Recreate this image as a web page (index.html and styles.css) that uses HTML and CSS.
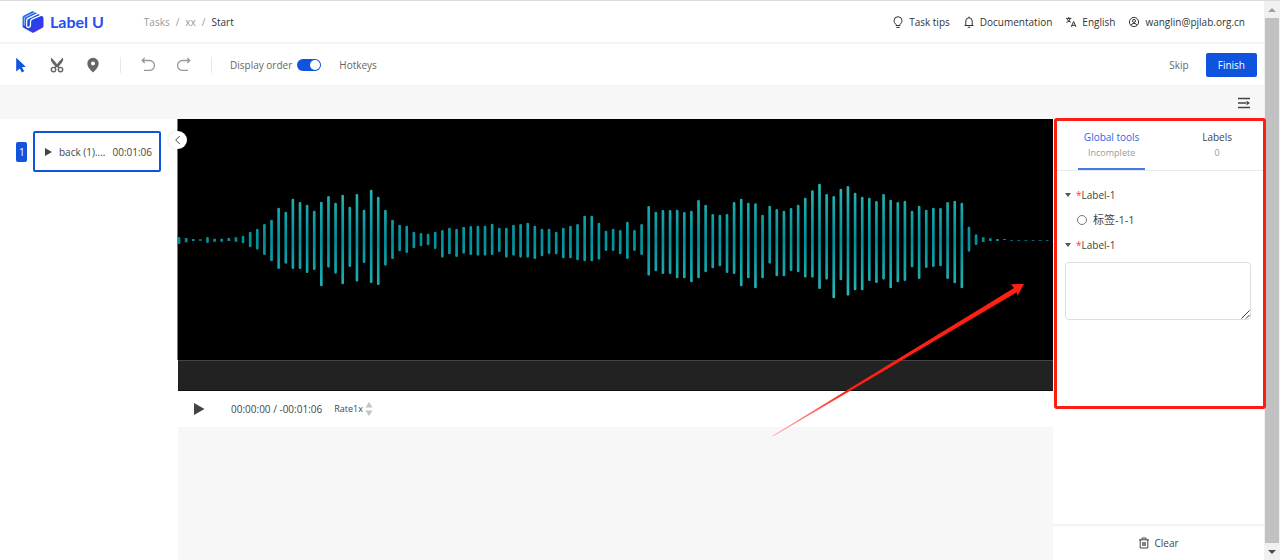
FILE: index.html
```html
<!DOCTYPE html>
<html lang="en">
<head>
<meta charset="utf-8">
<title>Label U</title>
<link rel="stylesheet" href="styles.css">
</head>
<body>
<div class="app">
  <header class="header">
    <a class="logo" href="#">
      <svg class="logo-mark" viewBox="0 0 22 22" aria-hidden="true">
        <defs><linearGradient id="brand" x1="0" y1="0" x2="1" y2="1"><stop offset="0" stop-color="#2f8dff"/><stop offset=".45" stop-color="#1747e6"/><stop offset="1" stop-color="#5a2cf0"/></linearGradient></defs>
        <path d="M11 .3L20.3 5.2Q21.5 5.9 21.5 7V15.2Q21.5 16.2 20.5 16.8L11.9 21.5Q11 22 10.1 21.5L1.5 16.8Q.5 16.2.5 15.2V6.2Q.5 5.2 1.5 4.7L9.7.4Q10.4 0 11 .3Z" fill="url(#brand)"/>
        <path d="M2.3 14.5V8.2Q2.3 6.6 3.7 5.9L13 1.2" fill="none" stroke="#fff" stroke-width=".6"/>
        <path d="M4.6 13.5V9.9Q4.6 8.2 6.1 7.4L16.8 2.2M4.6 13.5Q4.3 16.5 6.2 16.5 8.5 16.3 8.5 13.8V10.8Q8.5 8.9 10.1 8.1L20 3.8" fill="none" stroke="#fff" stroke-width="1.3"/>
      </svg>
      <span>Label U</span>
    </a>
    <nav class="crumbs" aria-label="Breadcrumb"><a href="#">Tasks</a><span>/</span><a href="#">xx</a><span>/</span><b>Start</b></nav>
    <nav class="links">
      <a href="#"><svg viewBox="0 0 12 12"><path d="M4 8.3Q2 7 2 4.7A4 4 0 0 1 10 4.7Q10 7 8 8.3V9.5H4ZM4.3 11.4H7.7"/></svg>Task tips</a>
      <a href="#"><svg viewBox="0 0 12 12"><path d="M1.5 9.5H10.5M2.8 9.5V5A3.2 3.2 0 0 1 9.2 5V9.5M6 1.8V.6M4.8 11.3H7.2"/></svg>Documentation</a>
      <a href="#"><svg viewBox="0 0 12 12"><path d="M1 2.4H6.4M3.7 1.2V2.4M1.4 6.5Q4.8 5.3 5.2 2.6M2.2 3.2Q3.2 5.5 5.8 6.2M6.2 10.9L8.6 5.5 11 10.9M7 9.3H10.2"/></svg>English</a>
      <a href="#"><svg viewBox="0 0 12 12"><circle cx="6" cy="6" r="4.6"/><circle cx="6" cy="4.9" r="1.5"/><path d="M3.2 9.3Q3.7 7.3 6 7.3T8.8 9.3"/></svg>wanglin@pjlab.org.cn</a>
    </nav>
  </header>

  <div class="toolbar">
    <div class="tools">
      <button aria-label="Select" class="blue"><svg viewBox="0 0 16 16"><path fill="currentColor" d="M3.2.8L12.8 9.8 9 10.2 11.2 14.3 8.8 15.4 6.9 11.4 3.2 14.6Z"/></svg></button>
      <button aria-label="Cut"><svg viewBox="0 0 16 16"><path fill="currentColor" d="M2 .8Q4 2 8 7.3 12 2 14 .8 15.2 4.1 10.5 8.5L9 10.2H7L5.5 8.5Q.8 4.1 2 .8Z"/><g fill="none" stroke="currentColor" stroke-width="1.4"><circle cx="4.5" cy="12.6" r="2.2"/><circle cx="11.5" cy="12.6" r="2.2"/><path d="M5.8 10.8L8 8.4 10.2 10.8"/></g></svg></button>
      <button aria-label="Point"><svg viewBox="0 0 16 16"><path fill="currentColor" fill-rule="evenodd" d="M8 .8A5.7 5.7 0 0 1 13.7 6.5Q13.7 10.4 8 15.5 2.3 10.4 2.3 6.5A5.7 5.7 0 0 1 8 .8ZM8 4.4A2 2 0 1 0 8 8.4 2 2 0 0 0 8 4.4Z"/></svg></button>
    </div>
    <div class="history">
      <button aria-label="Undo"><svg viewBox="0 0 16 16"><path d="M2.5 3.5H9.5A4.9 4.9 0 0 1 9.5 13.4H4M4.7 1L2.2 3.5 4.7 6"/></svg></button>
      <button aria-label="Redo"><svg viewBox="0 0 16 16"><path d="M13.5 3.5H6.5A4.9 4.9 0 0 0 6.5 13.4H12M11.3 1L13.8 3.5 11.3 6"/></svg></button>
    </div>
    <label class="order">Display order<input type="checkbox" role="switch" checked></label>
    <button class="hotkeys">Hotkeys</button>
    <div class="actions"><button>Skip</button><button class="primary">Finish</button></div>
  </div>

  <div class="strip"><button aria-label="Collapse panel"><svg viewBox="0 0 12 12"><path d="M0 1.5H12M0 6H8M0 10.5H12" stroke="currentColor" stroke-width="1.3"/><path d="M8.5 3.8L12 6 8.5 8.2Z" fill="currentColor"/></svg></button></div>

  <div class="main">
    <aside class="files">
      <span class="index">1</span>
      <button class="file"><svg viewBox="0 0 8 8"><path d="M1 0L8 4 1 8Z" fill="currentColor"/></svg><span>back (1)....</span><time>00:01:06</time></button>
      <button class="fold" aria-label="Collapse list"><svg viewBox="0 0 10 10"><path d="M6.7 1L2.7 5 6.7 9" fill="none" stroke="currentColor"/></svg></button>
    </aside>

    <main class="stage">
      <svg class="wave" viewBox="0 0 2625 723" preserveAspectRatio="none" role="img" aria-label="Waveform">
        <defs><linearGradient id="tone" gradientUnits="userSpaceOnUse" x1="0" y1="190" x2="0" y2="540"><stop offset="0" stop-color="#2bbab5"/><stop offset=".5" stop-color="#00909c"/><stop offset="1" stop-color="#2bbab5"/></linearGradient></defs>
        <path id="loud" fill="none" stroke="url(#tone)" stroke-width="8" stroke-linecap="round"/>
        <path id="quiet" fill="none" stroke="#00909c" stroke-width="8"/>
      </svg>
      <div class="track"></div>
      <div class="player">
        <button class="play" aria-label="Play"><svg viewBox="0 0 12 14"><path d="M1 1L11.5 7 1 13Z" fill="currentColor"/></svg></button>
        <span class="time">00:00:00 / -00:01:06</span>
        <button class="rate">Rate1x<svg viewBox="0 0 8 16"><path d="M4 1L7.5 6.5H.5ZM4 15L7.5 9.5H.5Z" fill="#c4c4c4"/></svg></button>
      </div>
    </main>

    <aside class="panel">
      <div class="tabs" role="tablist">
        <button role="tab" aria-selected="true" class="tab active">Global tools<small>Incomplete</small></button>
        <button role="tab" aria-selected="false" class="tab">Labels<small>0</small></button>
      </div>
      <div class="form">
        <button class="group"><i></i><em>*</em>Label-1</button>
        <label class="option"><input type="radio" name="tag">标签-1-1</label>
        <button class="group"><i></i><em>*</em>Label-1</button>
        <div class="field"><textarea aria-label="Label-1"></textarea><svg viewBox="0 0 9 9" aria-hidden="true"><path d="M.5 8.5L8.5.5M5 8.5L8.5 5" stroke="#333"/></svg></div>
      </div>
      <button class="clear"><svg viewBox="0 0 12 12"><path d="M1 2.8H11M4 2.8V1H8V2.8M2.2 2.8V11H9.8V2.8M4.8 5V9M7.2 5V9M6 5V9"/></svg>Clear</button>
      <div class="highlight"></div>
      <svg class="arrow" viewBox="0 0 252 152" aria-hidden="true">
        <defs><linearGradient id="fade" gradientUnits="userSpaceOnUse" x1="0" y1="152" x2="75" y2="107"><stop offset="0" stop-color="#fe2012" stop-opacity=".3"/><stop offset="1" stop-color="#fe2012"/></linearGradient></defs>
        <path d="M0 152L242 4 239 .2 252 0 245.5 11.7 244.8 8.2 1 152.5Z" fill="url(#fade)"/>
      </svg>
    </aside>
  </div>
</div>
<div class="scroll" aria-hidden="true"><i class="up"></i><div class="thumb"></div><i class="down"></i></div>
<script src="wave.js"></script>
</body>
</html>
```
FILE: styles.css
```css
* { box-sizing: border-box; }
body { margin: 0; display: flex; min-height: 100vh; background: #fff; color: #444; font: 10px/16px "Open Sans", "Noto Sans CJK SC", sans-serif; }
button { padding: 0; border: 0; background: none; color: inherit; font: inherit; cursor: pointer; }
a { color: inherit; text-decoration: none; }
svg { display: block; flex: none; }
.app { flex: 1; min-width: 0; display: flex; flex-direction: column; border-top: 1px solid #dcdcdc; }

.header { display: flex; align-items: center; height: 43px; padding: 0 19px 0 22px; border-bottom: 2px solid #f4f4f4; }
.logo { display: flex; align-items: center; gap: 6px; color: #2450ee; font: 700 16px/22px Lato, sans-serif; }
.logo-mark { width: 22px; height: 22px; }
.crumbs { display: flex; gap: 6px; margin-left: 40px; color: #999; }
.crumbs b { font-weight: 400; color: #333; }
.links { display: flex; gap: 13px; margin-left: auto; color: #333; }
.links a { display: flex; align-items: center; gap: 5px; }
.links svg, .clear svg { width: 12px; height: 12px; fill: none; stroke: currentColor; }

.toolbar { display: flex; align-items: center; height: 42px; padding: 0 7px 0 13px; border-bottom: 1px solid #f2f2f2; color: #666; }
.tools, .history { display: flex; gap: 20px; padding-right: 19px; border-right: 1px solid #e8e8e8; }
.tools svg, .history svg { width: 16px; height: 16px; }
.history { padding: 0 19px; color: #999; }
.history svg { fill: none; stroke: currentColor; stroke-width: 1.3; }
.blue { color: #1053dd; }
.order { display: flex; align-items: center; gap: 5px; margin-left: 18px; }
.order input { appearance: none; width: 24px; height: 12px; margin: 0; padding: 1px; border-radius: 6px; background: #1053dd; }
.order input::before { content: ""; display: block; width: 10px; height: 10px; margin-left: auto; border-radius: 50%; background: #fff; }
.hotkeys { margin-left: 18px; }
.actions { display: flex; align-items: center; gap: 17px; margin-left: auto; }
.primary { padding: 4px 12px; border-radius: 2px; background: #1053dd; color: #fff; }

.strip { display: flex; align-items: center; justify-content: flex-end; height: 33px; padding-right: 14px; background: #f7f7f7; color: #444; }
.strip svg { width: 12px; height: 12px; }

.main { flex: 1; display: grid; grid-template-columns: 178px 1fr 211px; }
.files { position: relative; display: flex; align-items: center; gap: 6px; align-self: start; padding: 12px 17px 12px 16px; }
.index { padding: 2px 3px; width: 11px; border-radius: 2px; background: #1053dd; color: #fff; text-align: center; }
.file { flex: 1; display: flex; align-items: center; gap: 7px; height: 41px; padding: 0 7px 0 9px; border: 2px solid #1053dd; border-radius: 2px; white-space: nowrap; }
.file svg { width: 8px; height: 8px; }
.file time { margin-left: auto; }
.fold { position: absolute; top: 12px; right: -9px; z-index: 2; display: grid; place-items: center; width: 18px; height: 18px; border-radius: 50%; background: #fff; box-shadow: 0 0 4px #0002; }
.fold svg { width: 10px; height: 10px; }

.stage { background: #f7f7f7; }
.wave { width: 100%; height: 241px; background: #000; box-shadow: -1px 0 #4a7bdc; }
.track { height: 31px; border-top: 1px solid #444; border-bottom: 1px solid #111; background: #222; }
.player { display: flex; align-items: center; height: 36px; padding-left: 15px; background: #fff; }
.play svg { width: 12px; height: 14px; }
.time { margin-left: 26px; }
.rate { display: flex; align-items: center; gap: 2px; margin-left: 12px; font-size: 9px; }
.rate svg { width: 8px; height: 16px; }

.panel { position: relative; display: flex; flex-direction: column; }
.tabs { display: grid; grid-template-columns: 5fr 4fr; height: 52px; border-bottom: 1px solid #e9e9e9; }
.tab { justify-self: center; align-self: end; height: 42px; padding: 0 6px 9px; }
.tab.active { color: #2b67e3; border-bottom: 2px solid #427be6; padding-bottom: 7px; }
.tab small { display: block; font-size: 9px; color: #999; }
.form { display: grid; align-content: start; justify-items: start; gap: 9px; padding: 16px 13px 0 12px; }
.group { display: flex; align-items: center; }
.group i { margin-right: 5px; border: 3px solid transparent; border-top: 4px solid #555; border-bottom: 0; }
.group em { color: #f33; font-style: normal; }
.option { display: flex; align-items: center; gap: 6px; padding-left: 12px; font-size: 11px; }
.option input { appearance: none; width: 10px; height: 10px; margin: 0; border: 1px solid #777; border-radius: 50%; }
.field { position: relative; justify-self: stretch; }
.field textarea { display: block; width: 100%; height: 58px; border: 1px solid #ddd; border-radius: 4px; resize: none; font: inherit; }
.field svg { position: absolute; right: 1px; bottom: 1px; width: 9px; height: 9px; }
.clear { display: flex; align-items: center; justify-content: center; gap: 4px; height: 36px; margin-top: auto; border-top: 2px solid #f3f3f3; }
.highlight { position: absolute; top: -1px; left: 1px; right: -2px; height: 291px; border: 3px solid #fe1d12; border-radius: 3px; pointer-events: none; }
.arrow { position: absolute; top: 165px; right: 240px; width: 252px; height: 152px; pointer-events: none; }

.scroll { display: flex; flex-direction: column; align-items: center; width: 16px; border-top: 1px solid #dcdcdc; background: #f1f1f1; }
.scroll .thumb { flex: 1; width: 14px; background: #c1c1c1; }
.scroll i { border: 4px solid transparent; }
.scroll .up { margin: 3px 0 6px; border-bottom-color: #a0a0a0; }
.scroll .down { margin: 7px 0 2px; border-top-color: #505050; }
```
FILE: wave.js
```js
// Top and bottom of each bar, in wave units.
const peaks = [
  [202,221],[204,217],[207,213],[208,212],[202,218],[206,215],[206,215],[204,213],[202,215],[198,219],
  [186,231],[177,238],[163,254],[150,273],[114,296],[126,280],[87,296],[97,296],[105,308],[123,299],
  [96,348],[79,292],[99,310],[75,342],[111,290],[73,334],[120,278],[60,338],[81,344],[120,286],
  [150,266],[165,243],[168,248],[186,234],[190,228],[192,225],[186,236],[181,262],[174,252],[177,260],
  [171,250],[169,254],[168,256],[168,256],[162,254],[174,245],[174,262],[165,256],[163,262],[159,262],
  [168,266],[177,258],[177,251],[186,252],[174,264],[168,264],[163,270],[138,273],[138,273],[159,268],
  [183,242],[177,242],[181,252],[156,266],[181,242],[163,254],[109,316],[126,303],[121,311],[121,311],
  [120,324],[127,324],[123,336],[91,324],[105,306],[133,294],[135,288],[133,308],[97,311],[87,348],
  [99,324],[101,354],[135,324],[108,280],[118,318],[123,318],[115,302],[105,306],[84,322],[62,322],
  [42,356],[73,328],[79,384],[57,330],[49,376],[69,360],[81,360],[84,332],[94,338],[73,328],
  [90,354],[97,336],[93,332],[123,291],[108,326],[120,293],[114,290],[115,288],[97,326],[93,339],
  [99,354],[171,244],[194,224],[202,216],[205,213],[207,213],[207,210],
  [210,212],[210,212],[210,212],[210,212],[210,212],[210,212]
];
const origin = 153;
const step = 21.35;
const cap = 3;

let loud = "";
let quiet = "";
peaks.forEach(([top, bottom], i) => {
  const x = (3 + i * step).toFixed(1);
  if (bottom - top > 14) {
    loud += `M${x} ${top + origin + cap}V${bottom + origin - cap}`;
  } else {
    quiet += `M${x} ${top + origin}V${bottom + origin}`;
  }
});
document.getElementById("loud").setAttribute("d", loud);
document.getElementById("quiet").setAttribute("d", quiet);
```
